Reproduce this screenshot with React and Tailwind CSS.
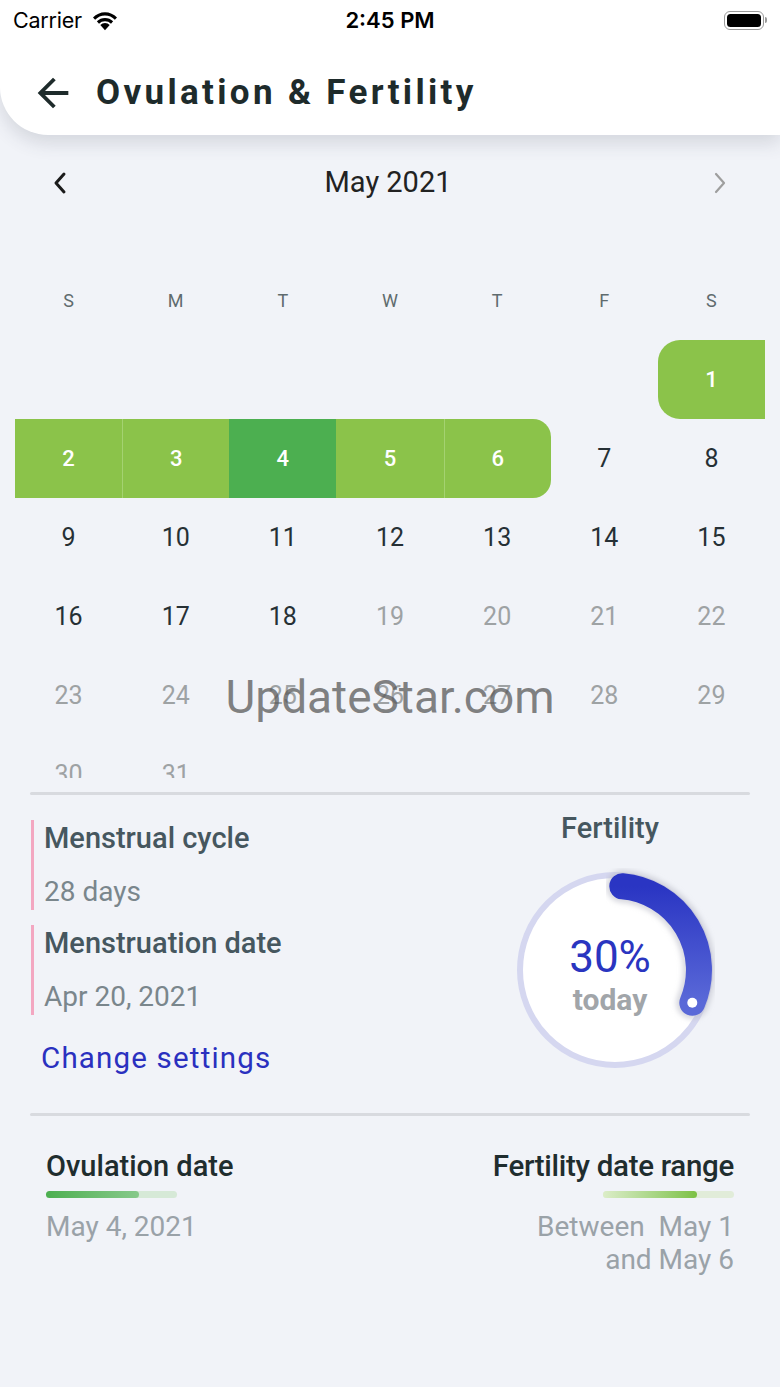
import { MdArrowBack } from "react-icons/md"

// ── Calendar data ─────────────────────────────────────────────────────────────
const WEEKDAYS = ["S", "M", "T", "W", "T", "F", "S"]

const cells = [
  ...Array(6).fill(null),
  ...Array.from({ length: 31 }, (_, i) => i + 1),
]

const HIGHLIGHT = {
  1: "bg-[#8bc34a] rounded-l-[22px] text-white font-medium text-[22px]",
  2: "bg-[#8bc34a] text-white font-medium text-[22px]",
  3: "bg-[#8bc34a] border-l border-[#a4d271] text-white font-medium text-[22px]",
  4: "bg-[#4caf50] text-white font-medium text-[22px]",
  5: "bg-[#8bc34a] text-white font-medium text-[22px]",
  6: "bg-[#8bc34a] border-l border-[#a4d271] rounded-r-[18px] text-white font-medium text-[22px]",
}

const dayClass = (d) => {
  if (HIGHLIGHT[d]) return HIGHLIGHT[d]
  if (d >= 19) return "text-[#9ea2a4] text-[25px]"
  return "text-[#263035] text-[25px]"
}

// ── Icons ─────────────────────────────────────────────────────────────────────
const Wifi = () => (
  <svg width="30" height="22" viewBox="0 0 28 20">
    <path d="M14 19.5 L9.6 14.6 A6.4 6.4 0 0 1 18.4 14.6 Z" fill="#000" />
    <path d="M6.4 11.2 A10.8 10.8 0 0 1 21.6 11.2 L19.6 13.4 A7.9 7.9 0 0 0 8.4 13.4 Z" fill="#000" />
    <path d="M2.8 7.6 A15.6 15.6 0 0 1 25.2 7.6 L23.2 9.8 A12.7 12.7 0 0 0 4.8 9.8 Z" fill="#000" />
  </svg>
)

const Battery = () => (
  <div className="flex items-center">
    <div className="w-[40px] h-[19px] rounded-[6px] border-[1.5px] border-[#9a9a9a] p-[2px]">
      <div className="w-full h-full rounded-[3.5px] bg-black" />
    </div>
    <div className="w-[2.5px] h-[6px] rounded-r-sm bg-[#9a9a9a] ml-[1px]" />
  </div>
)

const Chevron = ({ dir, color, width }) => (
  <svg width="16" height="24" viewBox="0 0 16 24">
    <polyline
      points={dir === "left" ? "12,3 4,12 12,21" : "4,3 12,12 4,21"}
      fill="none" stroke={color} strokeWidth={width} strokeLinecap="round" strokeLinejoin="round" />
  </svg>
)

// ── Fertility gauge ───────────────────────────────────────────────────────────
const Gauge = () => (
  <svg width="204" height="204" viewBox="-2 -2 204 204">
    <defs>
      <linearGradient id="arc" x1="0" y1="0" x2="0" y2="1">
        <stop offset="0" stopColor="#2a35c3" />
        <stop offset="1" stopColor="#5a69d8" />
      </linearGradient>
      <filter id="blur" x="-20%" y="-20%" width="140%" height="140%">
        <feGaussianBlur stdDeviation="2.5" />
      </filter>
    </defs>
    <circle cx="100" cy="100" r="95" fill="#ffffff" stroke="#d5d7f0" strokeWidth="6" />
    <path d="M 107.3 16.3 A 84 84 0 0 1 177.3 132.8"
      fill="none" stroke="#b9bcc6" strokeOpacity="0.55" strokeWidth="33" strokeLinecap="round" filter="url(#blur)" />
    <path d="M 107.3 16.3 A 84 84 0 0 1 177.3 132.8"
      fill="none" stroke="url(#arc)" strokeWidth="26" strokeLinecap="round" />
    <circle cx="177.3" cy="132.8" r="5" fill="#ffffff" />
  </svg>
)

// ── Main ──────────────────────────────────────────────────────────────────────
const App = () => {
  return (
    <div className="relative w-[780px] min-h-[1387px] bg-[#f1f3f8] overflow-hidden font-['Roboto',sans-serif]">
      {/* Header */}
      <div className="bg-white rounded-bl-[48px] shadow-[0_8px_18px_rgba(60,70,90,0.16)] relative z-10">
        <div className="h-[40px] flex items-center justify-between px-[13px] font-['Inter',sans-serif]">
          <div className="flex items-center gap-[8px] w-[200px]">
            <span className="text-[21.5px] text-black tracking-[-0.01em]">Carrier</span>
            <Wifi />
          </div>
          <span className="text-[22px] font-semibold text-black">2:45 PM</span>
          <div className="w-[200px] flex justify-end">
            <Battery />
          </div>
        </div>
        <div className="h-[95px] flex items-center pt-[11px] pl-[30px]">
          <MdArrowBack className="text-[46px] text-[#1e2b2b]" />
          <h1 className="ml-[20px] text-[35px] font-bold tracking-[0.095em] text-[#1e2b2b]">
            Ovulation &amp; Fertility
          </h1>
        </div>
      </div>

      {/* Month nav */}
      <div className="mt-[28px] h-[40px] flex items-center justify-between pl-[52px] pr-[52px]">
        <Chevron dir="left" color="#1b1b1b" width="3" />
        <span className="text-[29px] text-[#222] pr-[4px]">May 2021</span>
        <Chevron dir="right" color="#9e9e9e" width="2.2" />
      </div>

      {/* Weekdays */}
      <div className="mt-[82px] mx-[15px] grid grid-cols-7 h-[30px] items-center">
        {WEEKDAYS.map((w, i) => (
          <span key={i} className="text-center text-[18px] text-[#5f6b6e]">{w}</span>
        ))}
      </div>

      {/* Days */}
      <div className="mt-[25px] mx-[15px] h-[438px] overflow-hidden">
        <div className="grid grid-cols-7 auto-rows-[79px]">
          {cells.map((d, i) => (
            <div key={i} className={`flex items-center justify-center ${d ? dayClass(d) : ""}`}>
              {d}
            </div>
          ))}
        </div>
      </div>

      {/* Divider */}
      <div className="mt-[14px] mx-[30px] h-[3px] rounded-full bg-[#d8dadf]" />

      {/* Info */}
      <div className="h-[318px] flex items-start justify-between pl-[31px] pr-[60px]">
        <div className="pt-[25px]">
          <div className="border-l-[3px] border-[#f3a7c1] pl-[10px]">
            <p className="text-[29px] leading-[36px] font-medium text-[#46575f]">Menstrual cycle</p>
            <p className="mt-[18px] text-[28px] leading-[36px] text-[#7a868c]">28 days</p>
          </div>
          <div className="mt-[15px] border-l-[3px] border-[#f3a7c1] pl-[10px]">
            <p className="text-[29px] leading-[36px] font-medium text-[#46575f]">Menstruation date</p>
            <p className="mt-[18px] text-[28px] leading-[36px] text-[#7a868c]">Apr 20, 2021</p>
          </div>
          <p className="mt-[25px] ml-[10px] text-[29.5px] leading-[36px] tracking-[0.04em] text-[#2a30bf]">Change settings</p>
        </div>
        <div className="pt-[16px] w-[220px] flex flex-col items-center">
          <p className="text-[29px] leading-[34px] font-medium text-[#46575f]">Fertility</p>
          <div className="relative mt-[23px] ml-[10px]">
            <Gauge />
            <div className="absolute inset-0 flex flex-col items-center justify-center pr-[10px] pt-[12px]">
              <span className="text-[44px] leading-[46px] text-[#2a35c0]">30%</span>
              <span className="mt-[2px] text-[30px] leading-[36px] font-bold text-[#a1a5a9]">today</span>
            </div>
          </div>
        </div>
      </div>

      {/* Divider */}
      <div className="mx-[30px] h-[3px] rounded-full bg-[#d8dadf]" />

      {/* Dates */}
      <div className="flex justify-between px-[46px] pt-[33px]">
        <div>
          <p className="text-[29px] leading-[34px] font-medium text-[#1f2d2e]">Ovulation date</p>
          <div className="mt-[8px] w-[131px] h-[7px] rounded-full bg-[#d6e9d7] flex">
            <div className="w-[93px] h-full rounded-full bg-gradient-to-r from-[#4caf50] to-[#86c98a]" />
          </div>
          <p className="mt-[12px] text-[28px] leading-[33px] text-[#9aa2a8]">May 4, 2021</p>
        </div>
        <div className="flex flex-col items-end">
          <p className="text-[29.5px] leading-[34px] font-medium text-[#1f2d2e] tracking-[-0.01em]">Fertility date range</p>
          <div className="mt-[8px] w-[131px] h-[7px] rounded-full bg-[#e1ecd9] flex">
            <div className="w-[94px] h-full rounded-full bg-gradient-to-r from-[#dcedc8] to-[#7cc142]" />
          </div>
          <p className="mt-[12px] text-[28px] leading-[33px] text-[#9aa2a8] text-right whitespace-pre">{"Between  May 1"}</p>
          <p className="text-[28px] leading-[33px] text-[#9aa2a8] text-right">and May 6</p>
        </div>
      </div>

      {/* Watermark */}
      <div className="absolute left-0 right-0 top-[670px] flex justify-center pointer-events-none z-20">
        <span className="text-[46px] leading-[54px] text-[#5a5a5a]/75">UpdateStar.com</span>
      </div>
    </div>
  )
}

export default App
